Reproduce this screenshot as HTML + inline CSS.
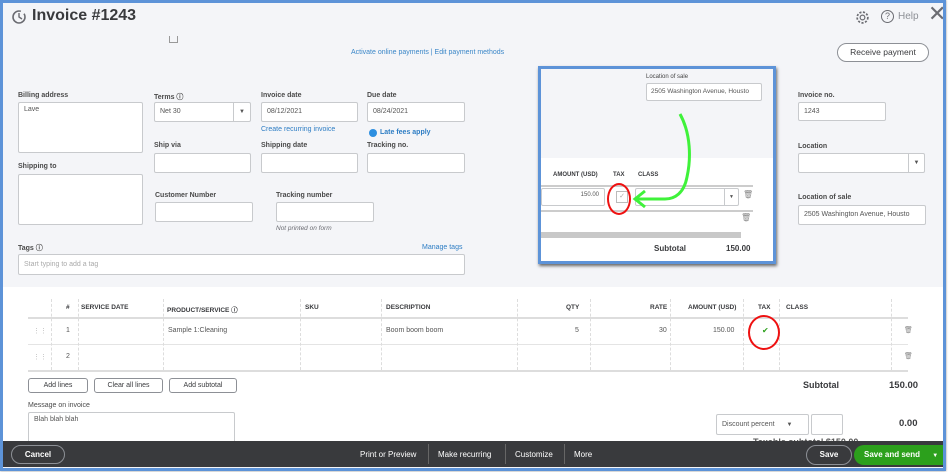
<!DOCTYPE html>
<html><head><meta charset="utf-8"><style>
*{box-sizing:border-box;margin:0;padding:0}
body{width:951px;height:472px;background:#fff;font-family:"Liberation Sans",sans-serif;position:relative;overflow:hidden;color:#393a3d}
.a{position:absolute;white-space:nowrap}
#frame{left:0px;top:0px;width:946px;height:471px;border:3px solid #5d93d8;background:#f4f5f8;overflow:hidden;box-shadow:0 0 2px #888}
.lbl{font-size:7px;font-weight:bold;color:#4a4a4a}
.in{background:#fff;border:1px solid #c8cacd;border-radius:2px;font-size:7px;color:#555;padding:3px 5px}
.lnk{font-size:7px;color:#2d7dc4}
.th{font-size:6.5px;font-weight:bold;color:#393a3d}
.td{font-size:7px;color:#555}
.btn{background:#fff;border:1px solid #8d9096;border-radius:3px;font-size:7px;text-align:center;line-height:13px;color:#393a3d}
.vl{border-left:1px dashed #ddd;width:0}
</style></head><body>
<div id="frame" class="a">
 <svg class="a" style="left:8px;top:6px" width="16" height="16" viewBox="0 0 16 16"><circle cx="8" cy="8" r="6" fill="none" stroke="#6b6c72" stroke-width="1.6" stroke-dasharray="30 4"/><path d="M8 4v4l3 2" fill="none" stroke="#6b6c72" stroke-width="1.4"/></svg>
 <div class="a" style="left:29px;top:4px;font-size:16px;font-weight:bold;color:#393a3d">Invoice #1243</div>
 <svg class="a" style="left:852px;top:7px" width="15" height="15" viewBox="0 0 14 14"><circle cx="7" cy="7" r="5" fill="none" stroke="#6b6c72" stroke-width="1.6" stroke-dasharray="2 1.4"/><circle cx="7" cy="7" r="2.2" fill="none" stroke="#6b6c72" stroke-width="1.1"/></svg>
 <div class="a" style="left:878px;top:7px;width:13px;height:13px;border:1.3px solid #6b6c72;border-radius:50%;font-size:9px;text-align:center;line-height:11px;color:#6b6c72">?</div>
 <div class="a" style="left:895px;top:8px;font-size:10px;color:#8d9096">Help</div>
 <div class="a" style="left:925px;top:0px;font-size:22px;color:#6b6c72;line-height:22px">✕</div>
 <div class="a" style="left:166px;top:33px;width:9px;height:7px;border:1px solid #999;border-top:none"></div>
 <div class="a lnk" style="left:348px;top:46px;color:#3b87c8">Activate online payments | Edit payment methods</div>
 <div class="a" style="left:834px;top:40px;width:92px;height:19px;border:1px solid #8d9096;border-radius:10px;background:#fff;font-size:8.5px;text-align:center;line-height:17px">Receive payment</div>

 <div class="a lbl" style="left:15px;top:89px">Billing address</div>
 <div class="a in" style="left:15px;top:99px;width:125px;height:51px">Lave</div>
 <div class="a lbl" style="left:15px;top:160px">Shipping to</div>
 <div class="a in" style="left:15px;top:171px;width:125px;height:51px"></div>

 <div class="a lbl" style="left:151px;top:89px">Terms ⓘ</div>
 <div class="a in" style="left:151px;top:99px;width:97px;height:20px;line-height:12px">Net 30<span style="position:absolute;right:0;top:0;width:17px;height:18px;border-left:1px solid #c8cacd;text-align:center;line-height:18px;font-size:6px">▼</span></div>
 <div class="a lbl" style="left:258px;top:89px">Invoice date</div>
 <div class="a in" style="left:258px;top:99px;width:97px;height:20px;line-height:12px">08/12/2021</div>
 <div class="a lnk" style="left:258px;top:123px">Create recurring invoice</div>
 <div class="a lbl" style="left:364px;top:89px">Due date</div>
 <div class="a in" style="left:364px;top:99px;width:98px;height:20px;line-height:12px">08/24/2021</div>
 <div class="a" style="left:366px;top:126px;width:8px;height:8px;border-radius:50%;background:#2d8fe0"></div>
 <div class="a lnk" style="left:377px;top:126px;font-weight:bold">Late fees apply</div>
 <div class="a lbl" style="left:151px;top:139px">Ship via</div>
 <div class="a in" style="left:151px;top:150px;width:97px;height:20px"></div>
 <div class="a lbl" style="left:258px;top:139px">Shipping date</div>
 <div class="a in" style="left:258px;top:150px;width:97px;height:20px"></div>
 <div class="a lbl" style="left:364px;top:139px">Tracking no.</div>
 <div class="a in" style="left:364px;top:150px;width:98px;height:20px"></div>
 <div class="a lbl" style="left:152px;top:189px">Customer Number</div>
 <div class="a in" style="left:152px;top:199px;width:98px;height:20px"></div>
 <div class="a lbl" style="left:273px;top:189px">Tracking number</div>
 <div class="a in" style="left:273px;top:199px;width:98px;height:20px"></div>
 <div class="a" style="left:273px;top:222px;font-size:6.5px;font-style:italic;color:#6b6c72">Not printed on form</div>
 <div class="a lbl" style="left:15px;top:240px">Tags ⓘ</div>
 <div class="a lnk" style="left:419px;top:241px">Manage tags</div>
 <div class="a in" style="left:15px;top:251px;width:447px;height:21px;line-height:13px;color:#aaa">Start typing to add a tag</div>

 <div class="a lbl" style="left:795px;top:89px">Invoice no.</div>
 <div class="a in" style="left:795px;top:99px;width:88px;height:19px;line-height:11px">1243</div>
 <div class="a lbl" style="left:795px;top:140px">Location</div>
 <div class="a in" style="left:795px;top:150px;width:127px;height:20px"><span style="position:absolute;right:0;top:0;width:16px;height:18px;border-left:1px solid #c8cacd;text-align:center;line-height:18px;font-size:6px">▼</span></div>
 <div class="a lbl" style="left:795px;top:191px">Location of sale</div>
 <div class="a in" style="left:795px;top:202px;width:128px;height:20px;line-height:12px;overflow:hidden">2505 Washington Avenue, Housto</div>

 <div class="a" style="left:0;top:284px;width:940px;height:160px;background:#fff"></div>
 <div class="a" style="left:25px;top:314px;width:880px;border-top:2px solid #ddd"></div>
 <div class="a" style="left:25px;top:341px;width:880px;border-top:1px solid #e4e4e4"></div>
 <div class="a" style="left:25px;top:367px;width:880px;border-top:2px solid #ddd"></div>
 <div class="a vl" style="left:48px;top:296px;height:71px"></div>
 <div class="a vl" style="left:75px;top:296px;height:71px"></div>
 <div class="a vl" style="left:160px;top:296px;height:71px"></div>
 <div class="a vl" style="left:297px;top:296px;height:71px"></div>
 <div class="a vl" style="left:378px;top:296px;height:71px"></div>
 <div class="a vl" style="left:514px;top:296px;height:71px"></div>
 <div class="a vl" style="left:587px;top:296px;height:71px"></div>
 <div class="a vl" style="left:667px;top:296px;height:71px"></div>
 <div class="a vl" style="left:740px;top:296px;height:71px"></div>
 <div class="a vl" style="left:776px;top:296px;height:71px"></div>
 <div class="a vl" style="left:888px;top:296px;height:71px"></div>
 <div class="a th" style="left:63px;top:301px">#</div>
 <div class="a th" style="left:78px;top:301px">SERVICE DATE</div>
 <div class="a th" style="left:164px;top:301px">PRODUCT/SERVICE ⓘ</div>
 <div class="a th" style="left:302px;top:301px">SKU</div>
 <div class="a th" style="left:383px;top:301px">DESCRIPTION</div>
 <div class="a th" style="left:563px;top:301px">QTY</div>
 <div class="a th" style="left:647px;top:301px">RATE</div>
 <div class="a th" style="left:685px;top:301px">AMOUNT (USD)</div>
 <div class="a th" style="left:755px;top:301px">TAX</div>
 <div class="a th" style="left:783px;top:301px">CLASS</div>
 <div class="a td" style="left:30px;top:324px;color:#bbb">⋮⋮</div>
 <div class="a td" style="left:63px;top:324px">1</div>
 <div class="a td" style="left:165px;top:324px">Sample 1:Cleaning</div>
 <div class="a td" style="left:383px;top:324px">Boom boom boom</div>
 <div class="a td" style="left:572px;top:324px">5</div>
 <div class="a td" style="left:656px;top:324px">30</div>
 <div class="a td" style="left:710px;top:324px">150.00</div>
 <div class="a" style="left:759px;top:323px;font-size:8px;color:#2ca01c">✔</div>
 <div class="a" style="left:745px;top:312px;width:32px;height:35px;border:2px solid #e11;border-radius:50%"></div>
 <div class="a td" style="left:901px;top:323px;color:#888">🗑</div>
 <div class="a td" style="left:30px;top:350px;color:#bbb">⋮⋮</div>
 <div class="a td" style="left:63px;top:350px">2</div>
 <div class="a td" style="left:901px;top:349px;color:#888">🗑</div>
 <div class="a btn" style="left:25px;top:375px;width:60px;height:15px">Add lines</div>
 <div class="a btn" style="left:91px;top:375px;width:69px;height:15px">Clear all lines</div>
 <div class="a btn" style="left:166px;top:375px;width:68px;height:15px">Add subtotal</div>
 <div class="a" style="left:800px;top:377px;font-size:9px;font-weight:bold">Subtotal</div>
 <div class="a" style="left:886px;top:377px;font-size:9.5px;font-weight:bold">150.00</div>
 <div class="a lbl" style="left:25px;top:399px;font-weight:normal">Message on invoice</div>
 <div class="a in" style="left:25px;top:409px;width:207px;height:35px">Blah blah blah</div>
 <div class="a in" style="left:713px;top:411px;width:93px;height:21px;line-height:13px">Discount percent <span style="margin-left:10px;font-size:6px">▼</span></div>
 <div class="a in" style="left:808px;top:411px;width:32px;height:21px"></div>
 <div class="a" style="left:896px;top:415px;font-size:9.5px;font-weight:bold">0.00</div>
 <div class="a" style="left:750px;top:434px;font-size:9px;font-weight:bold;color:#555">Taxable subtotal $150.00</div>

 <div class="a" style="left:0;top:438px;width:940px;height:26px;background:#393a3d"></div>
 <div class="a" style="left:8px;top:442px;width:54px;height:19px;border:1px solid #8d9096;border-radius:10px;color:#fff;font-size:8px;font-weight:bold;text-align:center;line-height:17px">Cancel</div>
 <div class="a" style="left:357px;top:447px;font-size:8px;color:#fff">Print or Preview</div>
 <div class="a" style="left:425px;top:441px;height:20px;border-left:1px solid #666"></div>
 <div class="a" style="left:435px;top:447px;font-size:8px;color:#fff">Make recurring</div>
 <div class="a" style="left:502px;top:441px;height:20px;border-left:1px solid #666"></div>
 <div class="a" style="left:512px;top:447px;font-size:8px;color:#fff">Customize</div>
 <div class="a" style="left:561px;top:441px;height:20px;border-left:1px solid #666"></div>
 <div class="a" style="left:571px;top:447px;font-size:8px;color:#fff">More</div>
 <div class="a" style="left:803px;top:442px;width:46px;height:20px;border:1px solid #8d9096;border-radius:10px;color:#fff;font-size:8px;font-weight:bold;text-align:center;line-height:18px">Save</div>
 <div class="a" style="left:851px;top:442px;width:90px;height:20px;background:#2ca01c;border-radius:10px 0 0 10px;color:#fff;font-size:8px;font-weight:bold;line-height:20px;padding-left:10px">Save and send <span style="margin-left:10px;font-size:6px">▼</span></div>

 <div class="a" style="left:535px;top:63px;width:238px;height:198px;border:3px solid #5d93d8;background:#fff;box-shadow:1px 2px 3px #666;overflow:hidden">
  <div class="a" style="left:0;top:0;width:232px;height:89px;background:#f4f5f8"></div>
  <div class="a" style="left:105px;top:5px;font-size:6px;color:#444">Location of sale</div>
  <div class="a in" style="left:105px;top:14px;width:116px;height:18px;font-size:6.5px;line-height:10px;overflow:hidden;padding:3px 4px">2505 Washington Avenue, Housto</div>
  <div class="a th" style="left:12px;top:103px;font-size:6px">AMOUNT (USD)</div>
  <div class="a th" style="left:72px;top:103px;font-size:6px">TAX</div>
  <div class="a th" style="left:97px;top:103px;font-size:6px">CLASS</div>
  <div class="a" style="left:0;top:116px;width:212px;border-top:2px solid #ccc"></div>
  <div class="a in" style="left:0;top:119px;width:64px;height:18px;text-align:right;font-size:6px">150.00</div>
  <div class="a" style="left:75px;top:122px;width:12px;height:12px;border:1px solid #bbb;font-size:7px;color:#aaa;text-align:center;line-height:10px">✓</div>
  <div class="a in" style="left:94px;top:119px;width:104px;height:18px"><span style="position:absolute;right:0;top:0;width:14px;height:16px;border-left:1px solid #c8cacd;text-align:center;line-height:16px;font-size:5px">▼</span></div>
  <div class="a" style="left:202px;top:121px;font-size:8px;color:#888">🗑</div>
  <div class="a" style="left:0;top:141px;width:212px;border-top:2px solid #ccc"></div>
  <div class="a" style="left:200px;top:144px;font-size:8px;color:#888">🗑</div>
  <div class="a" style="left:0;top:163px;width:200px;height:6px;background:#c8c8c8"></div>
  <div class="a" style="left:113px;top:175px;font-size:8px;font-weight:bold">Subtotal</div>
  <div class="a" style="left:185px;top:175px;font-size:8px;font-weight:bold">150.00</div>
  <div class="a" style="left:66px;top:114px;width:24px;height:32px;border:2px solid #e11;border-radius:50%"></div>
  <svg class="a" style="left:0;top:0" width="232" height="192"><path d="M139 45 C150 65 150 90 146 108 C143 124 134 130 124 130 L96 130" fill="none" stroke="#3ff23a" stroke-width="3"/><path d="M104 122 L94 130 L104 138" fill="none" stroke="#3ff23a" stroke-width="3"/></svg>
 </div>
</div>
</body></html>
